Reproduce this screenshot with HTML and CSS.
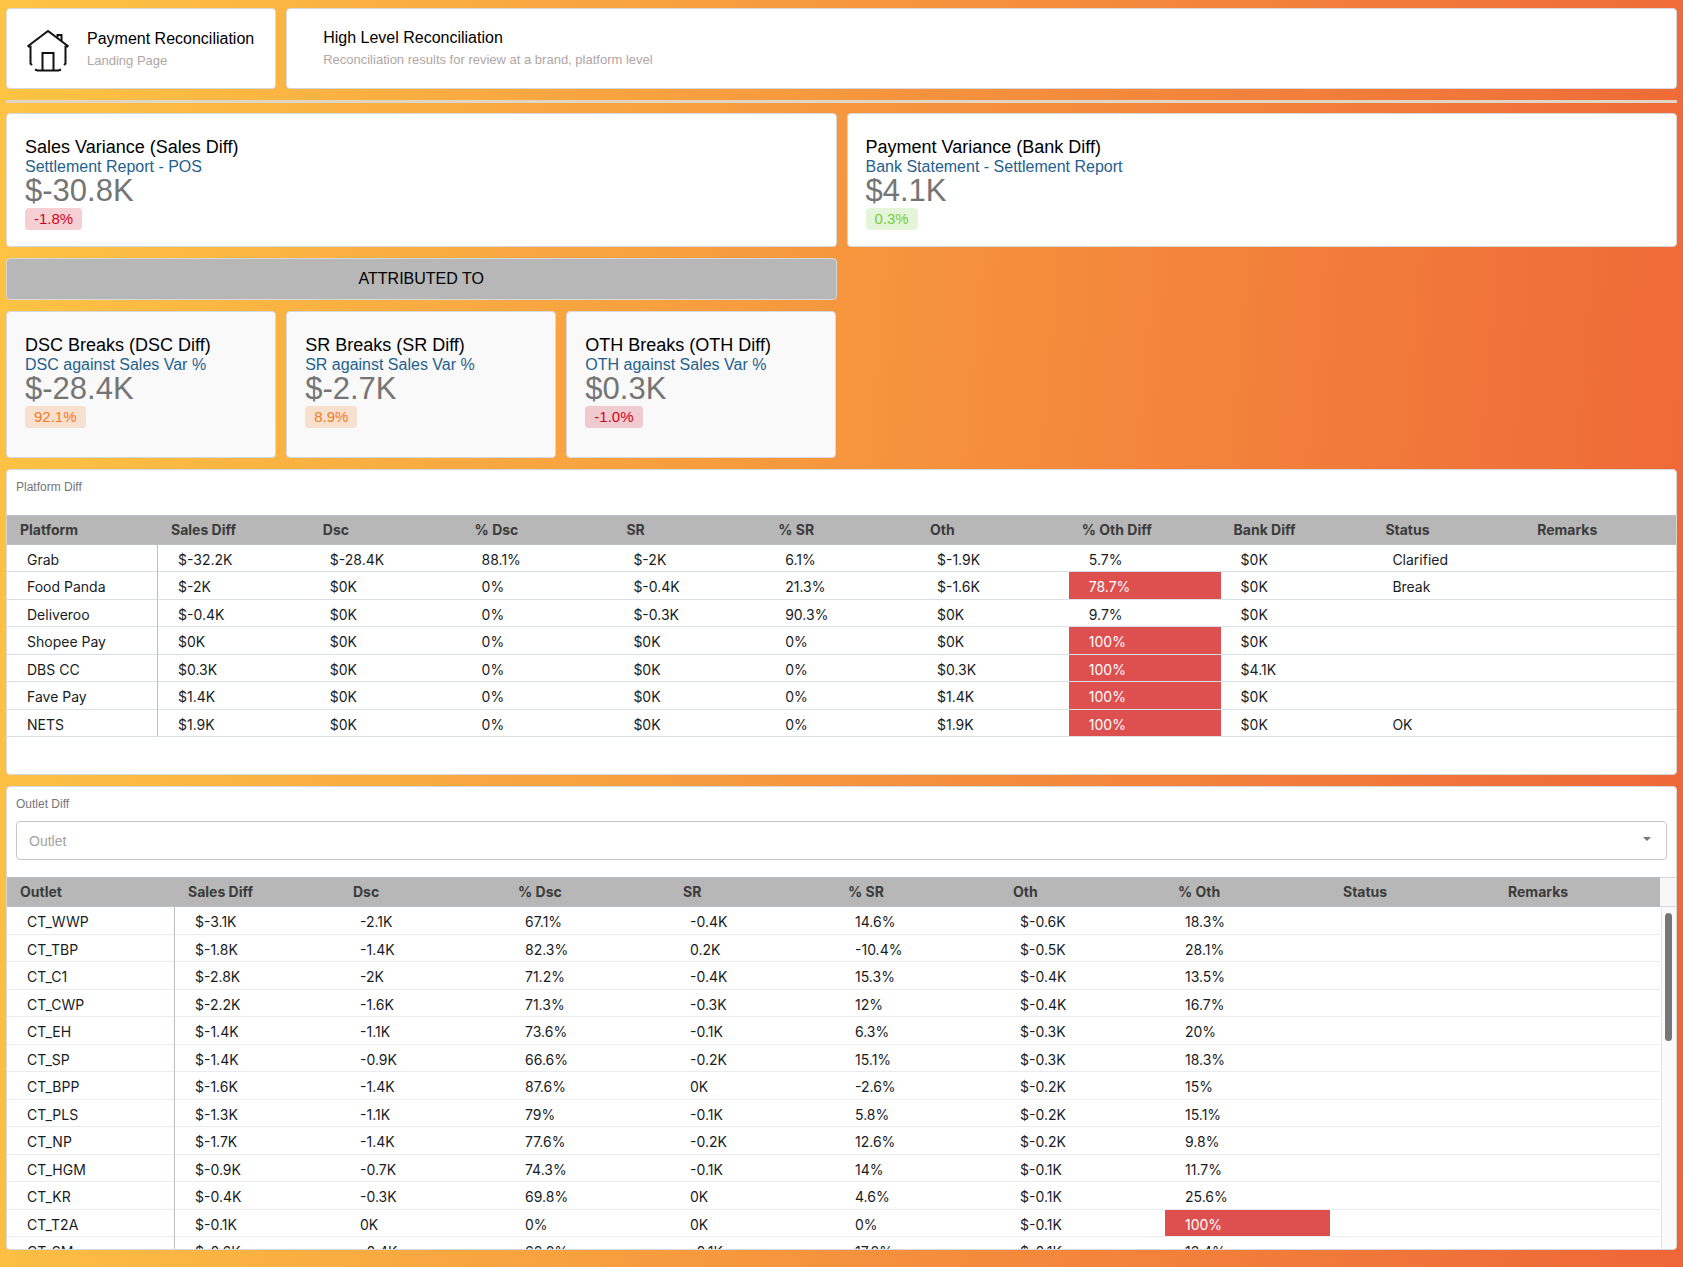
FILE: index.html
```html
<!DOCTYPE html>
<html lang="en">
<head>
<meta charset="utf-8">
<meta name="viewport" content="width=device-width, initial-scale=1">
<title>Payment Reconciliation</title>
<link rel="stylesheet" href="styles.css">
</head>
<body>
<main class="dashboard">
  <header class="top-row">
    <section class="card nav-card">
      <svg class="house" viewBox="0 0 44 44" aria-hidden="true">
        <path d="M1.500 18.500 L22 3 L42.500 18.500"/>
        <path d="M2 18.500H4.500V35.500L6 37M42 18.500H39.500V35.500L38 37"/>
        <path d="M31.500 9.500V7H35.500V13"/>
        <path d="M16.500 42V25H27.500V42"/>
        <path d="M9 41.500 L11.500 42.500H32.500L35 41.500"/>
      </svg>
      <div>
        <h1 class="head-title">Payment Reconciliation</h1>
        <p class="head-sub">Landing Page</p>
      </div>
    </section>
    <section class="card intro-card">
      <h2 class="head-title">High Level Reconciliation</h2>
      <p class="head-sub">Reconciliation results for review at a brand, platform level</p>
    </section>
  </header>
  <hr class="rule">
  <div class="half-row">
    <section class="card stat">
      <h2 class="stat-title">Sales Variance (Sales Diff)</h2>
      <p class="stat-sub">Settlement Report - POS</p>
      <p class="stat-value">$-30.8K</p>
      <span class="badge red">-1.8%</span>
    </section>
    <section class="card stat">
      <h2 class="stat-title">Payment Variance (Bank Diff)</h2>
      <p class="stat-sub">Bank Statement - Settlement Report</p>
      <p class="stat-value">$4.1K</p>
      <span class="badge green">0.3%</span>
    </section>
  </div>
  <div class="half-row">
    <div class="card banner">ATTRIBUTED TO</div>
  </div>
  <div class="sixth-row">
    <section class="card stat muted">
      <h2 class="stat-title">DSC Breaks (DSC Diff)</h2>
      <p class="stat-sub">DSC against Sales Var %</p>
      <p class="stat-value">$-28.4K</p>
      <span class="badge orange">92.1%</span>
    </section>
    <section class="card stat muted">
      <h2 class="stat-title">SR Breaks (SR Diff)</h2>
      <p class="stat-sub">SR against Sales Var %</p>
      <p class="stat-value">$-2.7K</p>
      <span class="badge orange">8.9%</span>
    </section>
    <section class="card stat muted">
      <h2 class="stat-title">OTH Breaks (OTH Diff)</h2>
      <p class="stat-sub">OTH against Sales Var %</p>
      <p class="stat-value">$0.3K</p>
      <span class="badge red">-1.0%</span>
    </section>
  </div>
  <section class="card panel platform">
    <h2 class="panel-title">Platform Diff</h2>
    <table class="grid platform-grid">
      <thead><tr><th>Platform</th><th>Sales Diff</th><th>Dsc</th><th>% Dsc</th><th>SR</th><th>% SR</th><th>Oth</th><th>% Oth Diff</th><th>Bank Diff</th><th>Status</th><th>Remarks</th></tr></thead>
      <tbody>
        <tr><td>Grab</td><td>$-32.2K</td><td>$-28.4K</td><td>88.1%</td><td>$-2K</td><td>6.1%</td><td>$-1.9K</td><td>5.7%</td><td>$0K</td><td>Clarified</td><td></td></tr>
        <tr><td>Food Panda</td><td>$-2K</td><td>$0K</td><td>0%</td><td>$-0.4K</td><td>21.3%</td><td>$-1.6K</td><td class="alert">78.7%</td><td>$0K</td><td>Break</td><td></td></tr>
        <tr><td>Deliveroo</td><td>$-0.4K</td><td>$0K</td><td>0%</td><td>$-0.3K</td><td>90.3%</td><td>$0K</td><td>9.7%</td><td>$0K</td><td></td><td></td></tr>
        <tr><td>Shopee Pay</td><td>$0K</td><td>$0K</td><td>0%</td><td>$0K</td><td>0%</td><td>$0K</td><td class="alert">100%</td><td>$0K</td><td></td><td></td></tr>
        <tr><td>DBS CC</td><td>$0.3K</td><td>$0K</td><td>0%</td><td>$0K</td><td>0%</td><td>$0.3K</td><td class="alert">100%</td><td>$4.1K</td><td></td><td></td></tr>
        <tr><td>Fave Pay</td><td>$1.4K</td><td>$0K</td><td>0%</td><td>$0K</td><td>0%</td><td>$1.4K</td><td class="alert">100%</td><td>$0K</td><td></td><td></td></tr>
        <tr><td>NETS</td><td>$1.9K</td><td>$0K</td><td>0%</td><td>$0K</td><td>0%</td><td>$1.9K</td><td class="alert">100%</td><td>$0K</td><td>OK</td><td></td></tr>
      </tbody>
    </table>
  </section>
  <section class="card panel">
    <h2 class="panel-title">Outlet Diff</h2>
    <div class="picker">
      <select class="picker-select" aria-label="Outlet"><option>Outlet</option></select>
      <svg class="picker-arrow" viewBox="0 0 8 4" aria-hidden="true"><path d="M0 0H8L4 4Z"/></svg>
    </div>
    <div class="scroll-area">
      <table class="grid outlet-grid">
        <thead><tr><th>Outlet</th><th>Sales Diff</th><th>Dsc</th><th>% Dsc</th><th>SR</th><th>% SR</th><th>Oth</th><th>% Oth</th><th>Status</th><th>Remarks</th></tr></thead>
        <tbody>
          <tr><td>CT_WWP</td><td>$-3.1K</td><td>-2.1K</td><td>67.1%</td><td>-0.4K</td><td>14.6%</td><td>$-0.6K</td><td>18.3%</td><td></td><td></td></tr>
          <tr><td>CT_TBP</td><td>$-1.8K</td><td>-1.4K</td><td>82.3%</td><td>0.2K</td><td>-10.4%</td><td>$-0.5K</td><td>28.1%</td><td></td><td></td></tr>
          <tr><td>CT_C1</td><td>$-2.8K</td><td>-2K</td><td>71.2%</td><td>-0.4K</td><td>15.3%</td><td>$-0.4K</td><td>13.5%</td><td></td><td></td></tr>
          <tr><td>CT_CWP</td><td>$-2.2K</td><td>-1.6K</td><td>71.3%</td><td>-0.3K</td><td>12%</td><td>$-0.4K</td><td>16.7%</td><td></td><td></td></tr>
          <tr><td>CT_EH</td><td>$-1.4K</td><td>-1.1K</td><td>73.6%</td><td>-0.1K</td><td>6.3%</td><td>$-0.3K</td><td>20%</td><td></td><td></td></tr>
          <tr><td>CT_SP</td><td>$-1.4K</td><td>-0.9K</td><td>66.6%</td><td>-0.2K</td><td>15.1%</td><td>$-0.3K</td><td>18.3%</td><td></td><td></td></tr>
          <tr><td>CT_BPP</td><td>$-1.6K</td><td>-1.4K</td><td>87.6%</td><td>0K</td><td>-2.6%</td><td>$-0.2K</td><td>15%</td><td></td><td></td></tr>
          <tr><td>CT_PLS</td><td>$-1.3K</td><td>-1.1K</td><td>79%</td><td>-0.1K</td><td>5.8%</td><td>$-0.2K</td><td>15.1%</td><td></td><td></td></tr>
          <tr><td>CT_NP</td><td>$-1.7K</td><td>-1.4K</td><td>77.6%</td><td>-0.2K</td><td>12.6%</td><td>$-0.2K</td><td>9.8%</td><td></td><td></td></tr>
          <tr><td>CT_HGM</td><td>$-0.9K</td><td>-0.7K</td><td>74.3%</td><td>-0.1K</td><td>14%</td><td>$-0.1K</td><td>11.7%</td><td></td><td></td></tr>
          <tr><td>CT_KR</td><td>$-0.4K</td><td>-0.3K</td><td>69.8%</td><td>0K</td><td>4.6%</td><td>$-0.1K</td><td>25.6%</td><td></td><td></td></tr>
          <tr><td>CT_T2A</td><td>$-0.1K</td><td>0K</td><td>0%</td><td>0K</td><td>0%</td><td>$-0.1K</td><td class="alert">100%</td><td></td><td></td></tr>
          <tr><td>CT_SM</td><td>$-0.6K</td><td>-0.4K</td><td>68.8%</td><td>-0.1K</td><td>17.8%</td><td>$-0.1K</td><td>13.4%</td><td></td><td></td></tr>
        </tbody>
      </table>
      <div class="scrollbar"><div class="scroll-corner"></div><div class="scroll-track"><div class="scroll-thumb"></div></div></div>
    </div>
  </section>
</main>
</body>
</html>
```
FILE: styles.css
```css
* { box-sizing: border-box; }

body {
  margin: 0;
  min-height: 100vh;
  background: linear-gradient(95deg, #fdc444, #ee6637);
  color: #000;
  font-family: "Liberation Sans", Arial, sans-serif;
}

h1, h2, p { margin: 0; font-weight: 400; }

.dashboard {
  display: flex;
  flex-direction: column;
  gap: 11px;
  padding: 8px 6px 16px;
}

.card {
  background: #fff;
  border: 1px solid #d5d9de;
  border-radius: 4px;
}

.top-row, .half-row, .sixth-row {
  display: grid;
  grid-template-columns: repeat(6, minmax(0, 1fr));
  column-gap: 10px;
}
.half-row > * { grid-column: span 3; }

.nav-card {
  display: flex;
  align-items: center;
  gap: 17px;
  height: 81px;
  padding: 2px 0 0 19px;
}
.house {
  width: 44px;
  height: 44px;
  fill: none;
  stroke: #111;
  stroke-width: 2;
}
.intro-card {
  grid-column: span 5;
  display: flex;
  flex-direction: column;
  justify-content: center;
  padding-left: 36px;
}
.head-title { font-size: 16px; line-height: 22px; }
.head-sub { font-size: 13px; line-height: 22px; color: #b0a6a4; }

.rule {
  width: 100%;
  height: 3px;
  margin: 0 0 -1px;
  border: 0;
  background: #e2d5c3;
}

.stat { height: 134px; padding: 23px 18px; }
.stat.muted { height: 147px; background: #f9f9f9; }
.stat-title { font-size: 18px; line-height: 20px; }
.stat-sub { font-size: 16px; line-height: 20px; color: #1f618d; }
.stat-value { font-size: 31px; line-height: 28px; color: #757575; }
.badge {
  display: inline-block;
  margin-top: 3px;
  padding: 0 9px;
  border-radius: 4px;
  font-size: 15px;
  line-height: 22px;
}
.badge.red { background: rgba(208, 2, 27, .19); color: #d0021b; }
.badge.green { background: rgba(112, 204, 54, .19); color: #76cc3c; }
.badge.orange { background: rgba(245, 124, 40, .2); color: #f57c28; }

.banner {
  background: #b7b7b7;
  font-size: 16px;
  line-height: 40px;
  text-align: center;
}

.panel { overflow: hidden; }
.platform { padding-bottom: 37px; }
.panel-title {
  padding: 8px 9px;
  color: #757575;
  font-size: 12px;
  line-height: 18px;
}
.platform .panel-title { padding-bottom: 19px; }

.picker {
  display: grid;
  align-items: center;
  margin: 0 9px 17px;
}
.picker-select, .picker-arrow { grid-area: 1 / 1; }
.picker-select {
  width: 100%;
  height: 39px;
  padding: 0 12px;
  border: 1px solid #c6c6c6;
  border-radius: 4px;
  background: #fff;
  appearance: none;
  color: #a2a2a2;
  font: 14px "Liberation Sans", Arial, sans-serif;
}
.picker-arrow {
  justify-self: end;
  width: 8px;
  height: 4px;
  margin: 0 16px 4px 0;
  fill: #757575;
  pointer-events: none;
}

.grid {
  width: 100%;
  table-layout: fixed;
  border-collapse: separate;
  border-spacing: 0;
  color: #181d1f;
  font: 14px/20px Inter, sans-serif;
}
.grid th {
  height: 30px;
  padding: 0 0 0 13px;
  border: solid #babfc7;
  border-width: 1px 0;
  background: #b7b7b7;
  color: #3b3b3b;
  font-weight: 700;
  text-align: left;
}
.grid td {
  height: 27px;
  padding: 3px 0 0 20px;
  border-bottom: 1px solid #d9dfe9;
}
.grid tr:nth-child(even) td { height: 28px; }
.grid td:first-child { border-right: 1px solid #babfc7; }
.grid .alert { background: #de4f4f; color: #fff; }
.platform-grid th:first-child { width: 151px; }

.scroll-area { display: flex; height: 372px; overflow: hidden; }
.outlet-grid { flex: 1; align-self: flex-start; }
.outlet-grid th:first-child { width: 168px; }
.outlet-grid td { height: 28px; border-color: #e9ebf0; }
.outlet-grid tr:nth-child(even) td { height: 27px; }
.scrollbar {
  display: flex;
  flex-direction: column;
  width: 16px;
}
.scroll-corner {
  height: 30px;
  border: solid #d5d9e0;
  border-width: 1px 0;
  background: #f7f7f7;
}
.scroll-track {
  flex: 1;
  margin-left: 1px;
  padding: 6px 3px;
  border-left: 1px solid #e4e4e4;
  background: #fafafa;
}
.scroll-thumb {
  width: 7px;
  height: 128px;
  border-radius: 4px;
  background: #767676;
}
```
